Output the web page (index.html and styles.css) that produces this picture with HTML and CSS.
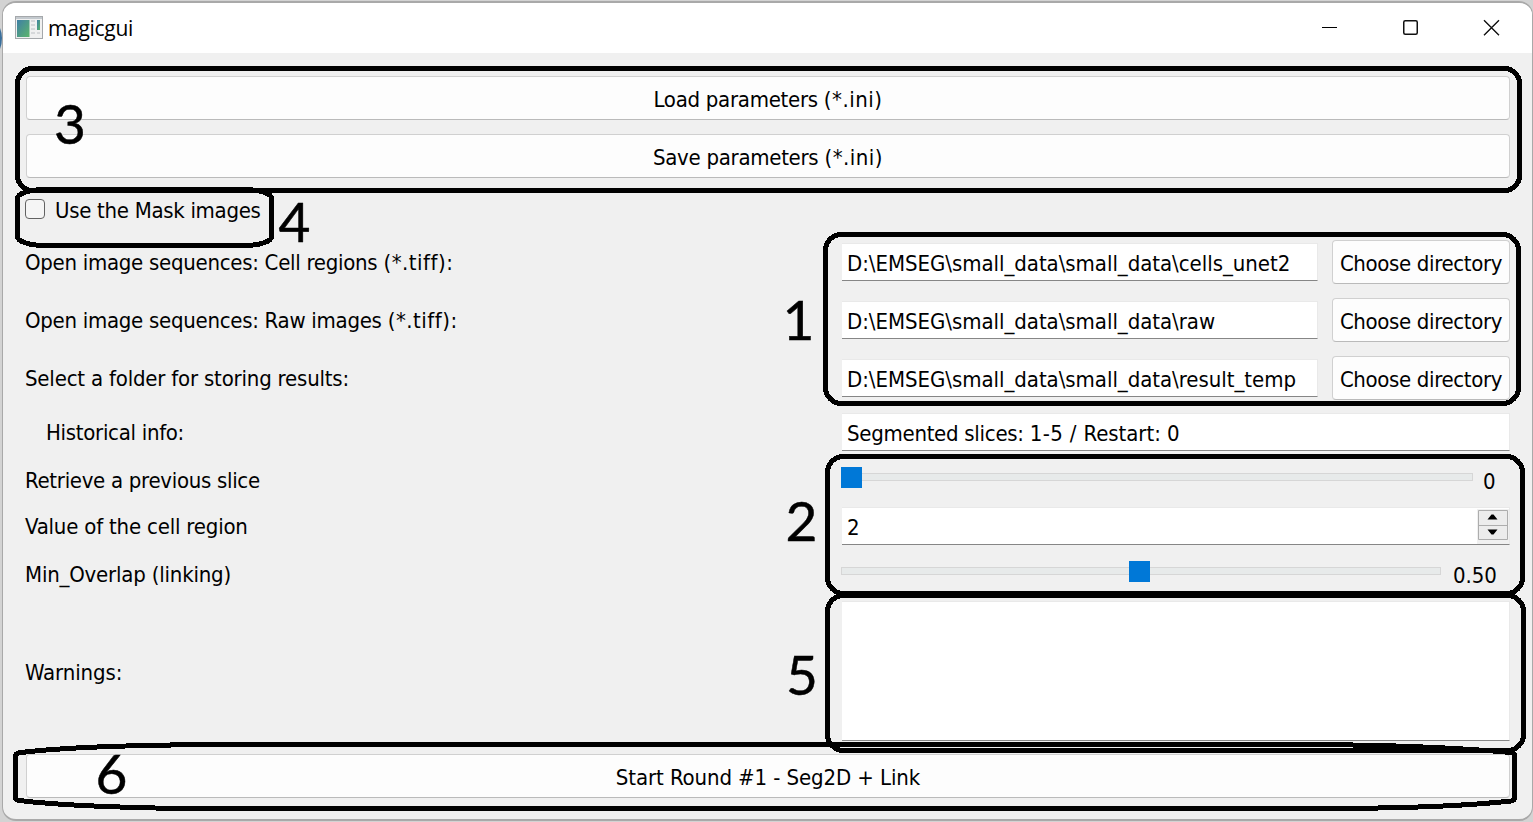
FILE: index.html
```html
<!DOCTYPE html>
<html lang="en">
<head>
<meta charset="utf-8">
<title>magicgui</title>
<link rel="stylesheet" href="styles.css">
</head>
<body>
<div class="window">
  <header class="titlebar">
    <svg class="app-icon" width="28" height="24" viewBox="0 0 28 24">
      <defs>
        <linearGradient id="g" x1="0" y1="0" x2="1" y2="1"><stop offset="0" stop-color="#3f7fa6"/><stop offset="1" stop-color="#5cb56b"/></linearGradient>
      </defs>
      <rect x=".5" y=".5" width="27" height="22" fill="#f0f0f0" stroke="#a5a8ab"/>
      <rect x="1" y="1" width="26" height="2" fill="#c3c9ce"/>
      <rect x="2" y="4" width="12.500" height="17" fill="url(#g)"/>
      <path d="M16 5h4M16 9h4M16 13h4M16 17h4M22 17h3" stroke="#d6d8da" stroke-width="2"/>
      <rect x="22" y="4" width="3" height="10" fill="url(#g)"/>
    </svg>
    <span class="title">magicgui</span>
    <svg class="controls" width="180" height="20" viewBox="0 0 180 20">
      <path d="M0 9.5h15" stroke="#000" stroke-width="1"/>
      <rect x="81.75" y="2.75" width="13.5" height="13.5" rx="1.5" fill="none" stroke="#111" stroke-width="1.5"/>
      <path d="M162 2.2l15 15M177 2.2l-15 15" stroke="#111" stroke-width="1.4"/>
    </svg>
  </header>
  <main class="form">
    <button class="btn"><span class="dense">Load parameters </span><span class="ext">(*.ini)</span></button>
    <button class="btn"><span class="dense">Save parameters </span><span class="ext">(*.ini)</span></button>
    <label class="check"><span class="box"></span><span class="check-text">Use the Mask images</span></label>
    <div class="row file"><span class="label dense">Open image sequences: Cell regions <span class="ext">(*.tiff):</span></span><div class="field">D:\EMSEG\small_data\small_data\cells_unet2</div><button class="btn pick">Choose directory</button></div>
    <div class="row file"><span class="label dense">Open image sequences: Raw images <span class="ext">(*.tiff):</span></span><div class="field">D:\EMSEG\small_data\small_data\raw</div><button class="btn pick">Choose directory</button></div>
    <div class="row file"><span class="label snug">Select a folder for storing results:</span><div class="field">D:\EMSEG\small_data\small_data\result_temp</div><button class="btn pick">Choose directory</button></div>
    <div class="row"><span class="label indent tight">Historical info:</span><div class="field info"><span class="dense">Segmented slices: </span><span class="loose">1-5 / </span>Restart: 0</div></div>
    <div class="row"><span class="label low tight">Retrieve a previous slice</span><div class="slider"><div class="track"><span class="thumb"></span></div><span class="value">0</span></div></div>
    <div class="row"><span class="label snug">Value of the cell region</span>
      <div class="field spin"><span>2</span>
        <svg class="spinner" width="32" height="35" viewBox="0 0 32 35">
          <rect width="32" height="35" fill="#f0f0f0"/>
          <path d="M1.500 1.500h29v29h-29zM1.500 16.500h29" fill="#ececec" stroke="#adadad"/>
          <path d="M10.500 10.500l4-5h2l4 5zM10.500 20.500h10l-4 5h-2z" fill="#000"/>
        </svg>
      </div>
    </div>
    <div class="row"><span class="label low snug">Min_Overlap (linking)</span><div class="slider wide"><div class="track"><span class="thumb half"></span></div><span class="value">0.50</span></div></div>
    <div class="row"><span class="label low">Warnings:</span><div class="field area"></div></div>
    <button class="btn">Start Round #1 - Seg2D + Link</button>
  </main>
</div>
<svg class="notes" width="1533" height="822" viewBox="0 0 1533 822">
  <path d="M0 28Q4 38 0 49" fill="#3a6f9c"/>
  <g class="outline">
    <rect x="17.500" y="68.500" width="1502" height="122" rx="15"/>
    <rect x="17.500" y="189.500" width="254" height="56" rx="27" ry="9"/>
    <rect x="825.500" y="234.500" width="693" height="169" rx="16"/>
    <rect x="827.500" y="456.500" width="695" height="137" rx="16"/>
    <rect x="827.500" y="595.500" width="696" height="155" rx="16"/>
    <path d="M15.500 757Q15.500 753.500 19 752.800C60 747.500 130 745 220 744.500H1310C1400 745 1460 748 1511 752.500Q1514.500 753 1514.500 756V798Q1514.500 800.500 1511 801C1470 805.500 1420 808 1340 808.500H180C120 807.500 60 805.500 19 800.500Q15.500 800 15.500 797Z"/>
  </g>
  <g class="digits">
    <text x="70" y="144">3</text>
    <text x="294.500" y="242">4</text>
    <text x="798.500" y="340">1</text>
    <text x="801.500" y="541">2</text>
    <text x="802" y="695">5</text>
    <text x="111.500" y="794">6</text>
  </g>
</svg>
</body>
</html>
```
FILE: styles.css
```css
* { box-sizing: border-box; }
body {
  margin: 0;
  width: 1533px;
  height: 822px;
  padding: 1px 0 0 2px;
  overflow: hidden;
  position: relative;
  background: #d3d3d3;
  color: #000;
  font-family: "DejaVu Sans Condensed", "DejaVu Sans", sans-serif;
  font-stretch: condensed;
  font-size: 22px;
  letter-spacing: -0.1px;
}
.window {
  width: 1531px;
  height: 820px;
  border: 2px solid #a9a9a9;
  border-right-width: 1px;
  border-left-width: 1px;
  border-radius: 14px;
  background: #f0f0f0;
  overflow: hidden;
}
.titlebar {
  height: 50px;
  display: flex;
  align-items: center;
  padding-left: 12px;
  background: #fff;
}
.title {
  margin-left: 5px;
  flex: 1;
  font: 21px "Open Sans", "Noto Sans", sans-serif;
  letter-spacing: -0.3px;
}
.controls { margin-right: 30px; }
.form {
  display: grid;
  grid-template-rows: 44px 44px 34px 44px 44px 44px 37px 29px 37px 29px 138px 44px;
  row-gap: 14px;
  padding: 23px 22px 0 22px;
}
.btn {
  margin: 0 0 0 1px;
  padding: 2px 0 0;
  border: 1px solid #d0d0d0;
  border-bottom-color: #bababa;
  border-radius: 4px;
  background: #fdfdfd;
  color: inherit;
  font: inherit;
  letter-spacing: inherit;
}
.check { display: flex; align-items: center; letter-spacing: -0.3px; }
.box {
  width: 20px;
  height: 20px;
  border: 1px solid #626262;
  border-radius: 4px;
  background: #f5f5f5;
}
.check-text { margin-left: 10px; padding-top: 2px; }
.row {
  display: grid;
  grid-template-columns: 816px 1fr;
  align-items: center;
}
.row.file { grid-template-columns: 816px 1fr 178px; }
.indent { padding-left: 21px; }
.snug { letter-spacing: -0.2px; }
.tight { letter-spacing: -0.3px; }
.dense { letter-spacing: -0.28px; }
.ext { letter-spacing: 0.5px; }
.loose { letter-spacing: 0.35px; }
.low { padding-top: 2px; }
.field {
  height: 38px;
  margin-left: 1px;
  padding: 0 0 0 5px;
  line-height: 39px;
  background: #fff;
  border: solid #e9e9e9;
  border-width: 1px 1px 1px 0;
  border-bottom-color: #868686;
  letter-spacing: -0.04px;
  white-space: nowrap;
}
.info, .spin { align-self: start; margin-top: -1px; }
.area { height: 140px; align-self: start; margin-top: -1px; }
.file .field { margin-right: 14px; }
.pick {
  height: 44px;
  width: 178px;
  margin-left: 0;
  letter-spacing: -0.35px;
}
.spin { display: flex; justify-content: space-between; }
.spinner { margin-top: 1px; }
.slider { display: flex; align-items: center; height: 29px; }
.track {
  width: 632px;
  height: 8px;
  margin-top: -5px;
  background: #e7eaea;
  border: 1px solid #d6d6d6;
  position: relative;
}
.wide .track { width: 600px; }
.thumb {
  position: absolute;
  left: -1px;
  top: -7px;
  width: 21px;
  height: 21px;
  background: #0078d7;
}
.thumb.half { left: 287px; }
.value { margin-left: 10px; padding-top: 4px; }
.wide .value { margin-left: 12px; }
.notes { position: absolute; left: 0; top: 0; }
.outline { fill: none; stroke: #000; stroke-width: 5; shape-rendering: crispEdges; }
.digits {
  font: 55px Lato, sans-serif;
  text-anchor: middle;
  letter-spacing: 0;
  stroke: #000;
  stroke-width: 0.5;
}
```
